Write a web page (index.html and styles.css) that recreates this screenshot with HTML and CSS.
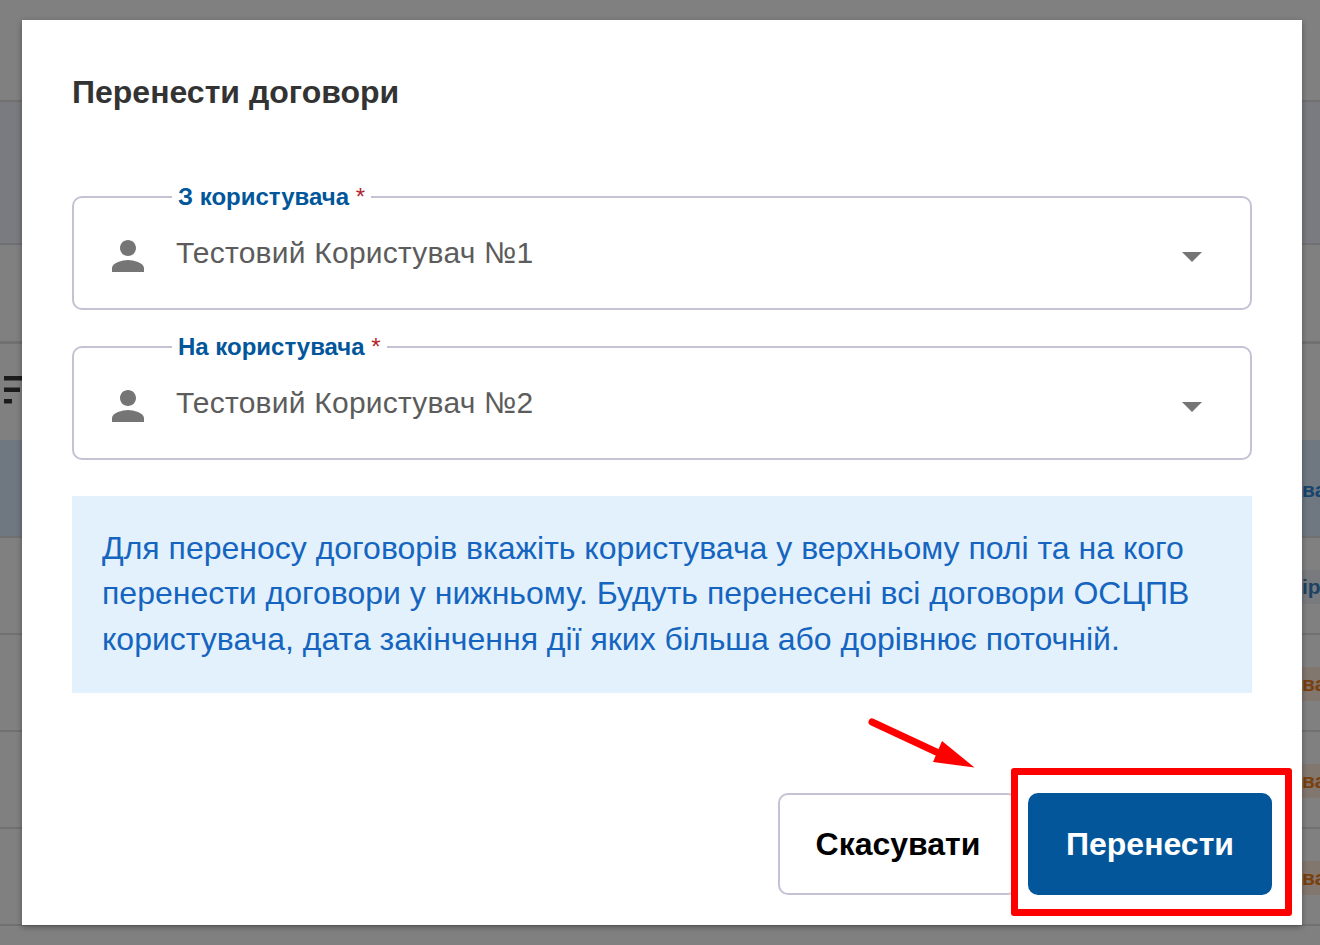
FILE: index.html
```html
<!DOCTYPE html>
<html lang="uk">
<head>
<meta charset="utf-8">
<title>Перенести договори</title>
<link rel="stylesheet" href="styles.css">
</head>
<body>
<div class="backdrop">
  <div class="row row-top"></div>
  <div class="row row-band"></div>
  <div class="row row-plain"></div>
  <div class="row row-tools">
    <svg class="filter-icon" width="22" height="32" viewBox="0 0 22 32"><path d="M4 3h18v4.500H4zM4 14.500h16v4.500H4zM4 26h8v4.500H4z" fill="#1c1c1c"/></svg>
  </div>
  <div class="row row-data row-selected"><span class="chip chip-blue">ва</span></div>
  <div class="row row-data"><span class="chip chip-navy">ір</span></div>
  <div class="row row-data"><span class="chip chip-orange">ва</span></div>
  <div class="row row-data"><span class="chip chip-orange">ва</span></div>
  <div class="row row-data"><span class="chip chip-orange">ва</span></div>
</div>

<section class="modal">
  <h1 class="modal-title">Перенести договори</h1>

  <fieldset class="field field-first">
    <legend class="field-label">З користувача <span class="req">*</span></legend>
    <div class="field-body">
      <svg class="person" width="48" height="48" viewBox="0 0 24 24"><path d="M12 12c2.21 0 4-1.790 4-4s-1.790-4-4-4-4 1.790-4 4 1.790 4 4 4zm0 2c-2.670 0-8 1.340-8 4v2h16v-2c0-2.660-5.330-4-8-4z" fill="#757575"/></svg>
      <span class="field-value">Тестовий Користувач №1</span>
      <span class="caret"></span>
    </div>
  </fieldset>

  <fieldset class="field field-second">
    <legend class="field-label">На користувача <span class="req">*</span></legend>
    <div class="field-body">
      <svg class="person" width="48" height="48" viewBox="0 0 24 24"><path d="M12 12c2.21 0 4-1.790 4-4s-1.790-4-4-4-4 1.790-4 4 1.790 4 4 4zm0 2c-2.670 0-8 1.340-8 4v2h16v-2c0-2.660-5.330-4-8-4z" fill="#757575"/></svg>
      <span class="field-value">Тестовий Користувач №2</span>
      <span class="caret"></span>
    </div>
  </fieldset>

  <p class="info">Для переносу договорів вкажіть користувача у верхньому полі та на кого перенести договори у нижньому. Будуть перенесені всі договори ОСЦПВ користувача, дата закінчення дії яких більша або дорівнює поточній.</p>

  <div class="actions">
    <button class="btn btn-cancel" type="button">Скасувати</button>
    <button class="btn btn-primary" type="button">Перенести</button>
  </div>
</section>

<svg class="mark-arrow" width="120" height="70" viewBox="860 710 120 70"><path d="M872 722L945 756" stroke="#f00" stroke-width="7" stroke-linecap="round" fill="none"/><path d="M933 762L942 741L974.500 767.500Z" fill="#f00"/></svg>
<div class="mark-box"></div>
</body>
</html>
```
FILE: styles.css
```css
* { box-sizing: border-box; }
html, body { margin: 0; padding: 0; }
body {
  width: 1320px;
  height: 945px;
  overflow: hidden;
  position: relative;
  background: #808080;
  font-family: "Liberation Sans", Arial, sans-serif;
}

.backdrop { display: flex; flex-direction: column; }
.row {
  display: flex;
  align-items: center;
  justify-content: flex-end;
  border-bottom: 2px solid #717171;
  overflow: hidden;
}
.row-top { height: 102px; }
.row-band { height: 143px; background: #7a7b80; }
.row-plain { height: 99px; border-bottom-width: 3px; }
.row-tools { height: 96px; justify-content: flex-start; border-bottom: 0; }
.filter-icon { margin-top: -6px; flex: none; }
.row-data { height: 97px; }
.row-selected { height: 98px; background: #6f7780; }
.chip {
  height: 34px;
  width: 28px;
  margin-top: 3px;
  padding-left: 10px;
  font-size: 21px;
  font-weight: 700;
  line-height: 34px;
  white-space: nowrap;
}
.chip-blue { color: #17456d; }
.chip-navy { color: #1d4264; background: #787a7d; }
.chip-orange { color: #7a400e; background: #82776e; }

.modal {
  position: absolute;
  left: 22px;
  top: 20px;
  width: 1280px;
  height: 905px;
  background: #fff;
  padding: 54px 50px 0;
  box-shadow: 0 2px 6px rgba(0, 0, 0, .35);
}
.modal-title {
  margin: 0;
  height: 36px;
  font-size: 32px;
  line-height: 37px;
  font-weight: 700;
  color: #333;
}

.field {
  margin: 0;
  padding: 0;
  min-width: 0;
  height: 127px;
  border: 2px solid #c3c3d5;
  border-radius: 10px;
}
.field-first { margin-top: 73px; }
.field-second { margin-top: 23px; }
.field-label {
  margin-left: 98px;
  padding: 0 6px;
  height: 28px;
  font-size: 24px;
  line-height: 28px;
  font-weight: 700;
  color: #02569a;
  white-space: nowrap;
}
.req { color: #b3262e; font-weight: 400; }

.field-body {
  display: flex;
  align-items: center;
  height: 82px;
  padding: 0 48px 0 30px;
  margin-top: 4px;
}
.person { flex: none; }
.field-value {
  margin-left: 24px;
  margin-top: -7px;
  flex: 1;
  font-size: 30px;
  letter-spacing: .23px;
  color: #5c5c5c;
}
.caret {
  width: 0;
  height: 0;
  border-left: 10px solid transparent;
  border-right: 10px solid transparent;
  border-top: 10px solid #757575;
  margin-top: 2px;
}

.info {
  margin: 36px 0 0;
  height: 197px;
  padding: 30px 30px 0;
  background: #e3f1fc;
  color: #1565c0;
  font-size: 32px;
  line-height: 45.4px;
}

.actions {
  display: flex;
  justify-content: flex-end;
  gap: 9px;
  margin: 100px -20px 0 0;
}
.btn {
  height: 102px;
  border-radius: 10px;
  font-family: inherit;
  font-size: 32px;
  font-weight: 700;
  padding: 0;
}
.btn-cancel { width: 240px; margin-right: 1px; background: #fff; color: #000; border: 2px solid #c3c3d5; }
.btn-primary { width: 244px; background: #03569a; color: #fff; border: 0; }

.mark-box {
  position: absolute;
  left: 1011px;
  top: 768px;
  width: 281px;
  height: 148px;
  border: 7px solid #f00;
  border-radius: 3px;
}
.mark-arrow { position: absolute; left: 860px; top: 710px; }
```
